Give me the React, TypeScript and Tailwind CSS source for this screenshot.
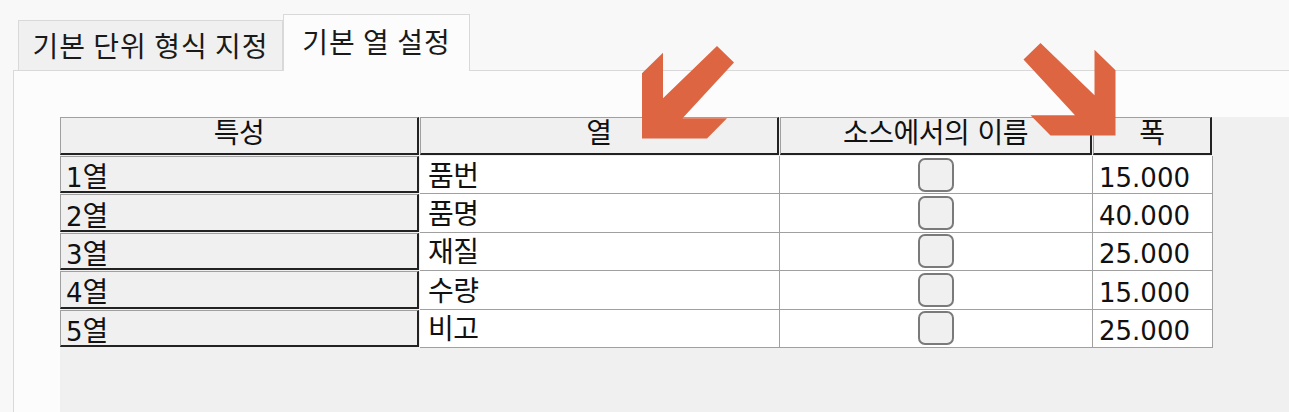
import React from 'react'

const rows = [
  { name: '1', col: '품번', width: '15.000' },
  { name: '2', col: '품명', width: '40.000' },
  { name: '3', col: '재질', width: '25.000' },
  { name: '4', col: '수량', width: '15.000' },
  { name: '5', col: '비고', width: '25.000' },
]

const headCell =
  'flex items-center justify-center bg-[#f0f0f0] border-t border-l border-[#a0a0a0] border-r-2 border-b-2 border-r-[#222] border-b-[#222] mr-px mb-px'

const Arrow = ({ flip, className }: { flip?: boolean; className: string }) => (
  <svg viewBox="0 0 92 93" className={`absolute ${className}`} style={flip ? { transform: 'scaleX(-1)' } : undefined}>
    <polygon points="75,0 92,16.5 40.5,72.3 85,72.3 65,92.5 0,92.5 0,27.3 21,6.7 21,52.3" fill="#dd6541" />
  </svg>
)

const CheckBox = () => (
  <div className="h-[34px] w-[36px] rounded-[7px] border-2 border-[#7a7a7a] bg-[#f0f0f0]" />
)

export default function App() {
  return (
    <div className="relative flex h-[412px] w-[1289px] flex-col overflow-hidden bg-[#f8f8f8] font-['DejaVu_Sans','Noto_Sans_CJK_KR',sans-serif] text-[28px] tracking-[-0.5px] text-[#111]">
      {/* tab strip */}
      <div className="flex items-end pl-[18px] pt-[14px]">
        <div className="flex h-[50px] w-[265px] items-center justify-center border border-b-0 border-[#d9d9d9] bg-[#f0f0f0] pb-[2px] font-['Noto_Sans_CJK_KR',sans-serif] tracking-[1px] text-[#1a1a1a]">
          기본 단위 형식 지정
        </div>
        <div className="relative -mb-px flex h-[57px] w-[187px] items-center justify-center border border-b-0 border-[#d9d9d9] bg-[#fcfcfc] pb-[4px] font-['Noto_Sans_CJK_KR',sans-serif] tracking-[1px] text-[#1a1a1a]">
          기본 열 설정
        </div>
      </div>

      {/* tab page */}
      <div className="ml-[13px] flex flex-1 flex-col border-l border-t border-[#d9d9d9] bg-[#fcfcfc] pl-[46px] pt-[46px]">
        <div className="flex-1 bg-[#f0f0f0]">
          <div className="grid w-[1153px] grid-cols-[360px_360px_313px_120px] leading-none">
            <div className={`${headCell} h-[38px] pb-[3px]`}>특성</div>
            <div className={`${headCell} h-[38px] pb-[3px]`}>열</div>
            <div className={`${headCell} h-[38px] pb-[3px]`}>소스에서의 이름</div>
            <div className={`${headCell} h-[38px] pb-[3px]`}>폭</div>

            {rows.map((r) => (
              <React.Fragment key={r.name}>
                <div className={`${headCell} h-[37.4px] !justify-start pl-[5px] pt-[8px]`}>
                  <span className="text-[26px] tracking-normal">{r.name}</span>열
                </div>
                <div className="flex h-[38.4px] items-center border-b border-r border-[#a0a0a0] bg-white pl-[8px] pt-[4px]">
                  {r.col}
                </div>
                <div className="flex h-[38.4px] items-center justify-center border-b border-r border-[#a0a0a0] bg-white">
                  <CheckBox />
                </div>
                <div className="flex h-[38.4px] items-center border-b border-r border-[#a0a0a0] bg-white pl-[6px] pt-[6px] text-[26px] tracking-normal">
                  {r.width}
                </div>
              </React.Fragment>
            ))}
          </div>
        </div>
      </div>

      <Arrow className="left-[642px] top-[46px] h-[93px] w-[92px]" />
      <Arrow flip className="left-[1023px] top-[43px] h-[93px] w-[93px]" />
    </div>
  )
}
